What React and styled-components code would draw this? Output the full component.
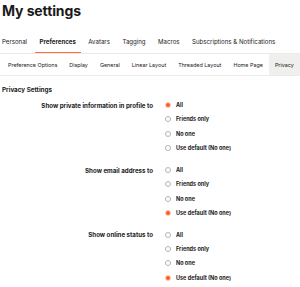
import React from 'react';
import styled, { createGlobalStyle } from 'styled-components';

const Global = createGlobalStyle`
  body {
    margin: 0;
    background: #fff;
    font-family: Inter, "Noto Sans", sans-serif;
    color: #1a1a1b;
  }
`;

const Page = styled.div`
  width: 300px;
  padding-top: 1px;
  overflow: hidden;
`;

const Title = styled.h1`
  font-size: 14px;
  font-weight: 700;
  margin: 0 0 0 2px;
  height: 22px;
  line-height: 20px;
  letter-spacing: -0.1px;
`;

const Tabs = styled.div`
  display: flex;
  gap: 12.5px;
  padding: 0 2px;
  height: 31px;
  align-items: flex-end;
  border-bottom: 1px solid #ebebeb;
  box-sizing: border-box;
`;

const Tab = styled.div`
  font-size: 6.1px;
  font-weight: ${(p) => (p.active ? 700 : 400)};
  color: #1a1a1b;
  padding: 0 ${(p) => (p.active ? 5 : 0)}px 7px;
  margin: 0 ${(p) => (p.active ? -5 : 0)}px;
  border-bottom: 1.5px solid ${(p) => (p.active ? '#ff6d3a' : 'transparent')};
  white-space: nowrap;
`;

const SubTabs = styled.div`
  display: flex;
  padding: 0 0 0 2px;
  height: 22px;
  align-items: stretch;
  border-bottom: 1px solid #ebebeb;
  box-sizing: border-box;
`;

const SubTab = styled.div`
  font-size: 5.4px;
  font-weight: 400;
  display: flex;
  align-items: center;
  padding: 1px 6px 0;
  background: ${(p) => (p.active ? '#efefed' : 'transparent')};
  white-space: nowrap;
`;

const Section = styled.div`
  padding: 10px 0 0 2px;
`;

const SectionTitle = styled.div`
  font-size: 6.3px;
  font-weight: 700;
  margin-bottom: 4px;
`;

const Group = styled.div`
  display: grid;
  grid-template-columns: 151px 1fr;
  column-gap: 12px;
  margin-bottom: 7.7px;
`;

const Label = styled.div`
  font-size: 6.2px;
  font-weight: 700;
  height: 14.3px;
  display: flex;
  align-items: center;
  justify-content: flex-end;
`;

const Options = styled.div`
  display: flex;
  flex-direction: column;
`;

const Option = styled.label`
  display: flex;
  align-items: center;
  gap: 5px;
  height: 14.3px;
  font-size: 5.5px;
  font-weight: 700;
`;

const Radio = styled.span`
  width: 6px;
  height: 6px;
  border-radius: 50%;
  box-sizing: border-box;
  border: ${(p) => (p.checked ? '1.2px solid #ffd3c2' : '0.8px solid #b5b5b5')};
  background: ${(p) => (p.checked ? '#ff5a1f' : '#fff')};
`;

const tabs = ['Personal', 'Preferences', 'Avatars', 'Tagging', 'Macros', 'Subscriptions & Notifications'];
const subTabs = ['Preference Options', 'Display', 'General', 'Linear Layout', 'Threaded Layout', 'Home Page', 'Privacy'];
const choices = ['All', 'Friends only', 'No one', 'Use default (No one)'];

const groups = [
  { label: 'Show private information in profile to', value: 0 },
  { label: 'Show email address to', value: 3 },
  { label: 'Show online status to', value: 3 },
];

export default function App() {
  return (
    <Page>
      <Global />
      <Title>My settings</Title>
      <Tabs>
        {tabs.map((t) => (
          <Tab key={t} active={t === 'Preferences'}>{t}</Tab>
        ))}
      </Tabs>
      <SubTabs>
        {subTabs.map((t) => (
          <SubTab key={t} active={t === 'Privacy'}>{t}</SubTab>
        ))}
      </SubTabs>
      <Section>
        <SectionTitle>Privacy Settings</SectionTitle>
        {groups.map((g) => (
          <Group key={g.label}>
            <Label>{g.label}</Label>
            <Options>
              {choices.map((c, i) => (
                <Option key={c}>
                  <Radio checked={i === g.value} />
                  {c}
                </Option>
              ))}
            </Options>
          </Group>
        ))}
      </Section>
    </Page>
  );
}
